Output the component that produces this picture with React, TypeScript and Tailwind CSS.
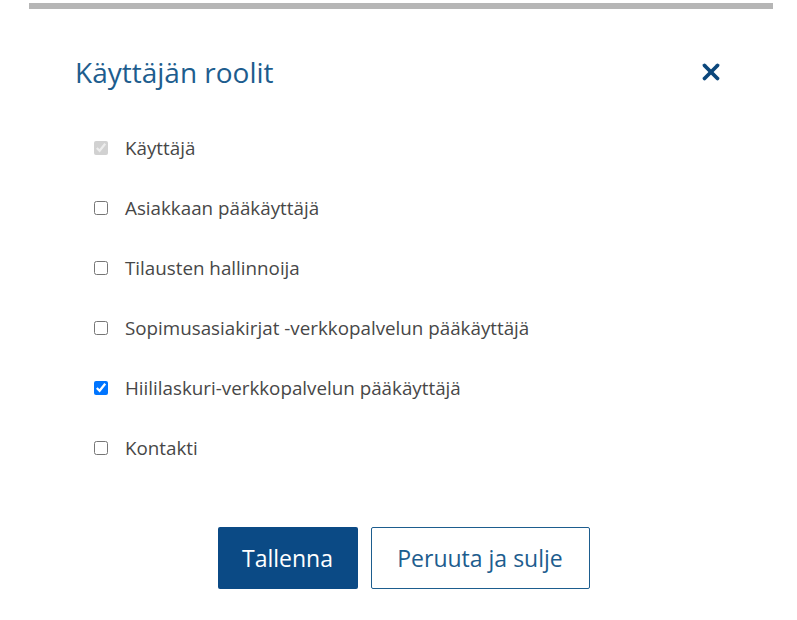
import { X } from "lucide-react";

const roles = [
  { label: "Käyttäjä", checked: true, disabled: true },
  { label: "Asiakkaan pääkäyttäjä", checked: false },
  { label: "Tilausten hallinnoija", checked: false },
  { label: "Sopimusasiakirjat -verkkopalvelun pääkäyttäjä", checked: false },
  { label: "Hiililaskuri-verkkopalvelun pääkäyttäjä", checked: true },
  { label: "Kontakti", checked: false },
];

export default function App() {
  return (
    <div className="min-h-screen bg-white font-['Open_Sans',sans-serif]">
      <div className="ml-[29px] mr-[24px] pt-[3px]">
        <div className="h-[6px] bg-[#b6b6b6]" />
      </div>

      <div className="px-[75px]">
        <div className="flex items-center justify-between pt-[45px]">
          <h2 className="text-[28px] leading-[36px] text-[#1d5d8e]">Käyttäjän roolit</h2>
          <X className="w-[26px] h-[26px] text-[#0b477c] -mr-[2px]" strokeWidth={3.5} />
        </div>

        <ul className="mt-[28px] pl-[19px]">
          {roles.map((r) => (
            <li key={r.label} className="flex items-center h-[60px]">
              <input
                type="checkbox"
                defaultChecked={r.checked}
                disabled={r.disabled}
                className="w-[14px] h-[14px] m-0"
              />
              <span className="ml-[17px] text-[18.8px] text-[#474747]">{r.label}</span>
            </li>
          ))}
        </ul>

        <div className="flex justify-center gap-[13px] mt-[49px] pl-[10px]">
          <button className="w-[140px] h-[62px] rounded-[2px] bg-[#0b4a85] text-white text-[23px]">
            Tallenna
          </button>
          <button className="w-[219px] h-[62px] rounded-[2px] border border-[#1d5d8e] bg-white text-[#1d5d8e] text-[23px]">
            Peruuta ja sulje
          </button>
        </div>
      </div>
    </div>
  );
}
